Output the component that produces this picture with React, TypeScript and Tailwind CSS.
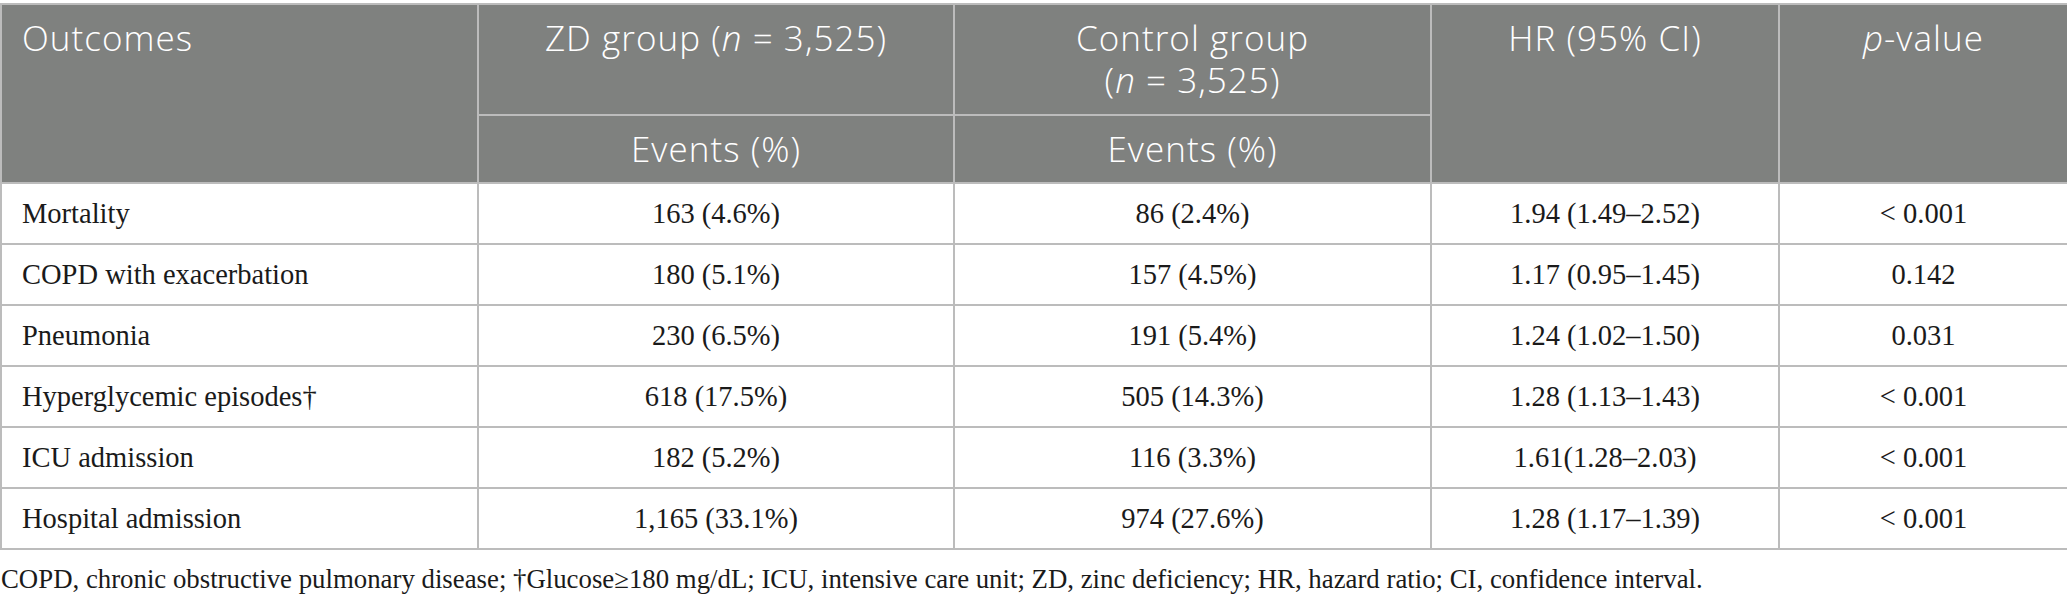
import React from "react";

const rows: [string, string, string, string, string][] = [
  ["Mortality", "163 (4.6%)", "86 (2.4%)", "1.94 (1.49–2.52)", "< 0.001"],
  ["COPD with exacerbation", "180 (5.1%)", "157 (4.5%)", "1.17 (0.95–1.45)", "0.142"],
  ["Pneumonia", "230 (6.5%)", "191 (5.4%)", "1.24 (1.02–1.50)", "0.031"],
  ["Hyperglycemic episodes†", "618 (17.5%)", "505 (14.3%)", "1.28 (1.13–1.43)", "< 0.001"],
  ["ICU admission", "182 (5.2%)", "116 (3.3%)", "1.61(1.28–2.03)", "< 0.001"],
  ["Hospital admission", "1,165 (33.1%)", "974 (27.6%)", "1.28 (1.17–1.39)", "< 0.001"],
];

const head =
  "border-2 border-[#bcbcbc] bg-[#7f817f] text-white font-[350] text-[35px] leading-[42px] tracking-[0.03em] align-top";
const body =
  "border-2 border-[#bcbcbc] text-[28.5px] leading-[34px] text-[#1a1a1a] h-[61px] align-middle";

export default function App() {
  return (
    <div className="w-[2067px] h-[606px] bg-white pt-[3px]">
      <table className="w-[2067px] table-fixed border-collapse">
        <colgroup>
          <col className="w-[477px]" />
          <col className="w-[476px]" />
          <col className="w-[477px]" />
          <col className="w-[348px]" />
          <col className="w-[289px]" />
        </colgroup>
        <thead style={{ fontFamily: '"Open Sans", "Noto Sans", sans-serif' }}>
          <tr className="h-[111px]">
            <th rowSpan={2} className={`${head} text-left pl-[20px] pt-[12px]`}>
              Outcomes
            </th>
            <th className={`${head} text-center pt-[12px]`}>
              ZD group (<i>n</i> = 3,525)
            </th>
            <th className={`${head} text-center pt-[12px]`}>
              Control group
              <br />
              (<i>n</i> = 3,525)
            </th>
            <th rowSpan={2} className={`${head} text-center pt-[12px]`}>
              HR (95% CI)
            </th>
            <th rowSpan={2} className={`${head} text-center pt-[12px]`}>
              <i>p</i>-value
            </th>
          </tr>
          <tr className="h-[68px]">
            <th className={`${head} !align-middle text-center`}>Events (%)</th>
            <th className={`${head} !align-middle text-center`}>Events (%)</th>
          </tr>
        </thead>
        <tbody style={{ fontFamily: '"Liberation Serif", "Times New Roman", serif' }}>
          {rows.map((r) => (
            <tr key={r[0]}>
              <td className={`${body} text-left pl-[20px]`}>{r[0]}</td>
              <td className={`${body} text-center`}>{r[1]}</td>
              <td className={`${body} text-center`}>{r[2]}</td>
              <td className={`${body} text-center`}>{r[3]}</td>
              <td className={`${body} text-center`}>{r[4]}</td>
            </tr>
          ))}
        </tbody>
      </table>
      <p
        className="mt-[12px] pl-[1px] text-[26.8px] leading-[34px] text-[#1a1a1a]"
        style={{ fontFamily: '"Liberation Serif", "Times New Roman", serif' }}
      >
        COPD, chronic obstructive pulmonary disease; †Glucose≥180 mg/dL; ICU, intensive care unit; ZD, zinc
        deficiency; HR, hazard ratio; CI, confidence interval.
      </p>
    </div>
  );
}
